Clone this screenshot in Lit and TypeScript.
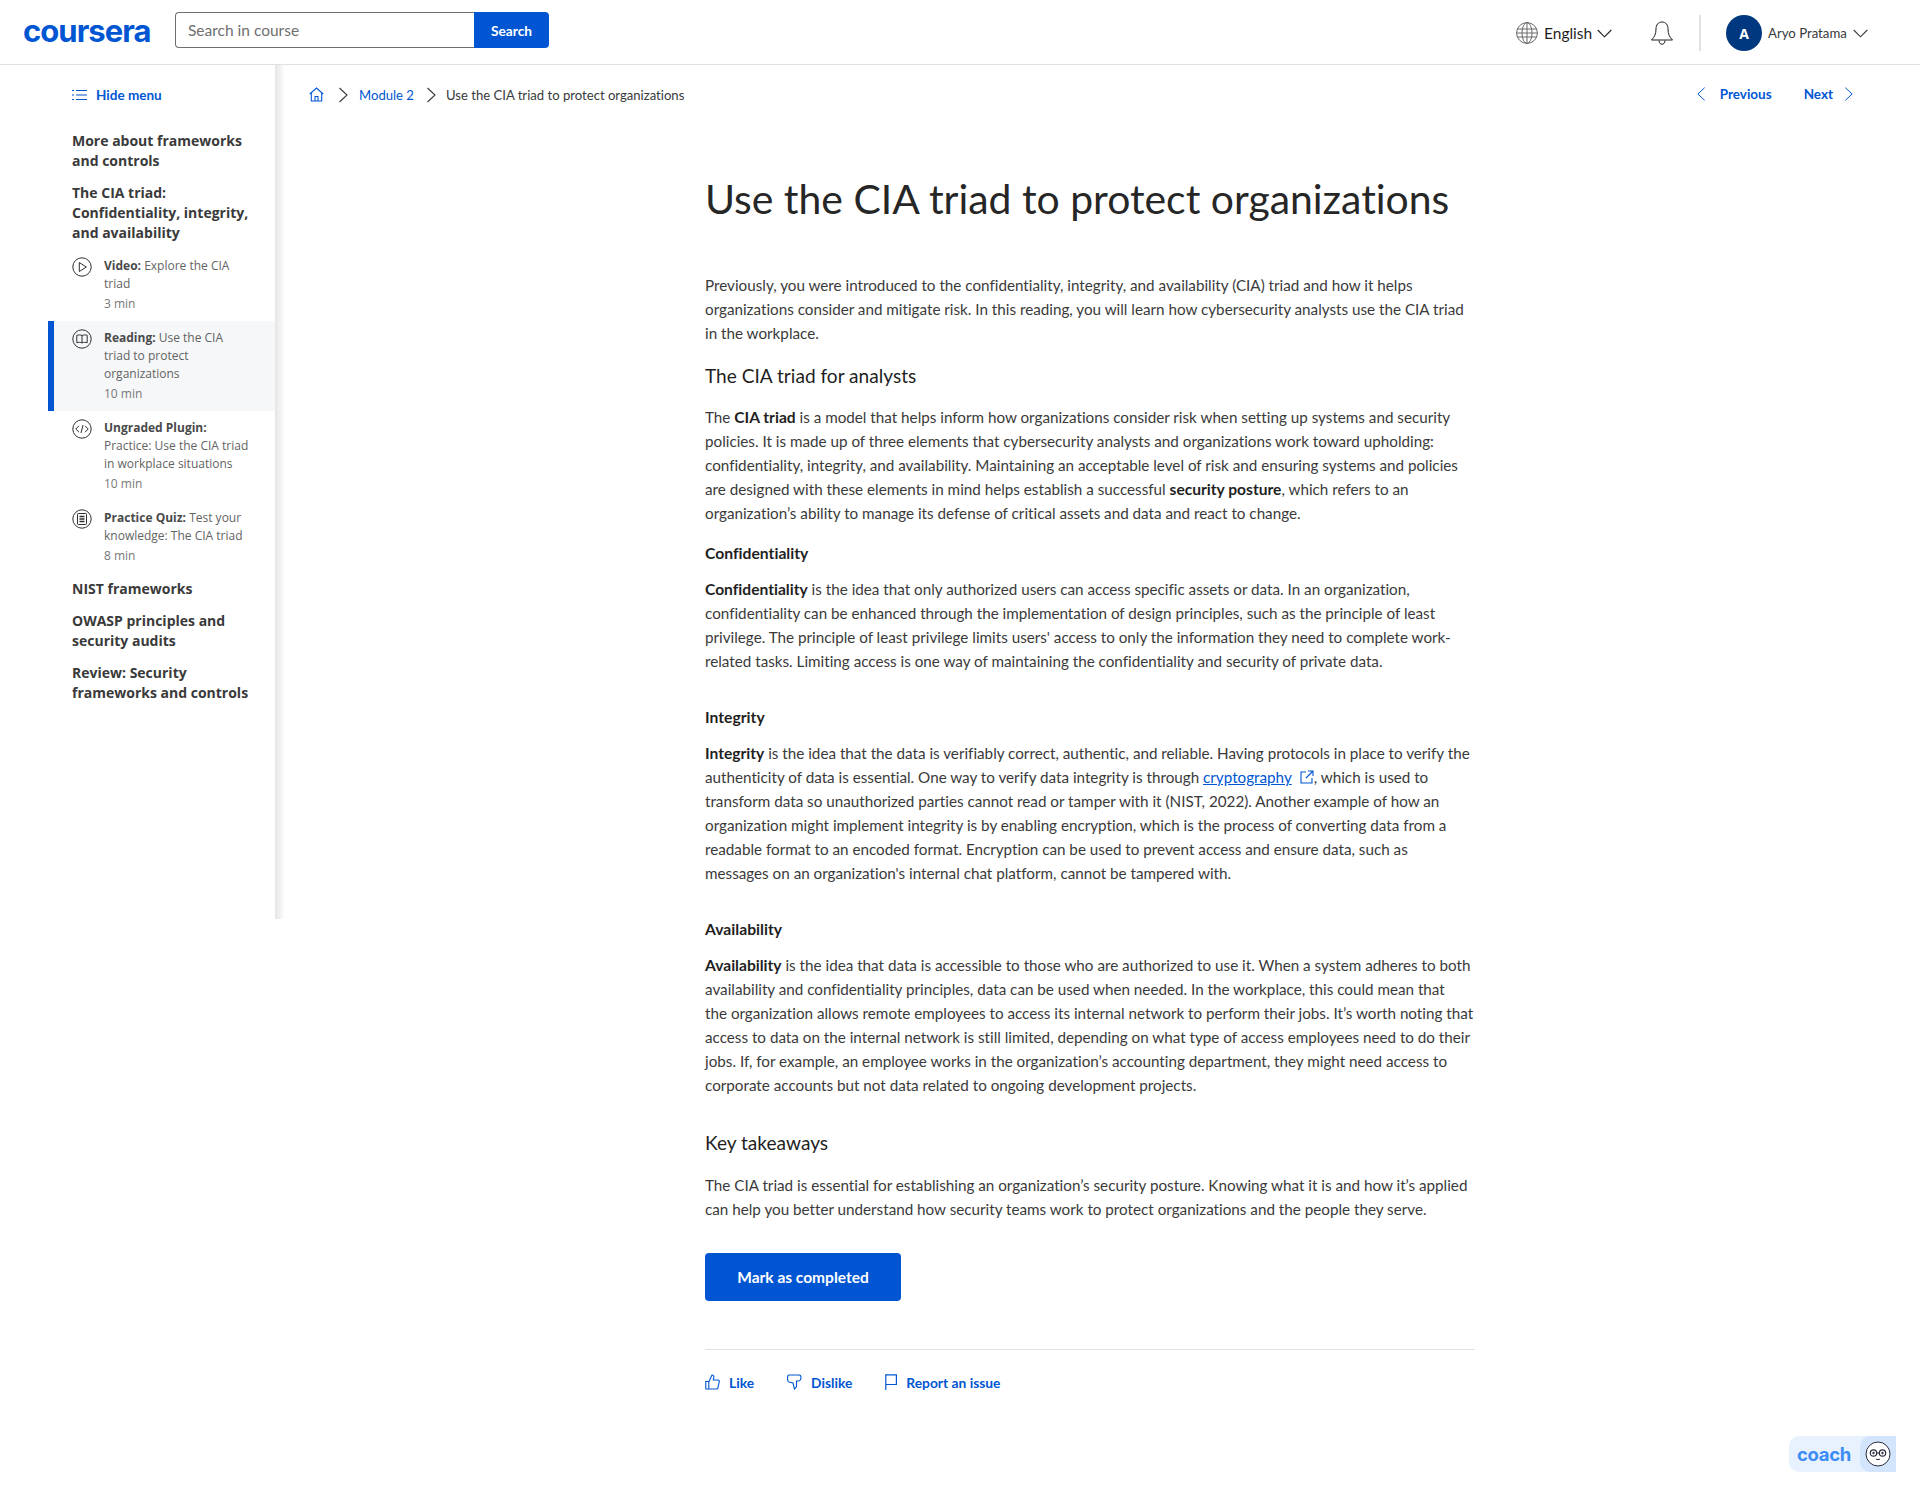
import { LitElement, html, css, svg } from "lit";
import { customElement } from "lit/decorators.js";

const chevR = (s = 10, h = 16) => html`<svg class="ic" width=${s} height=${h} viewBox="0 0 10 16" fill="none" stroke="currentColor" stroke-width="1.1"><path d="M1.5 1l7.5 7-7.5 7"/></svg>`;
const chevL = () => html`<svg class="ic" width="9" height="16" viewBox="0 0 10 16" fill="none" stroke="currentColor" stroke-width="1.1"><path d="M8.5 1L1 8l7.5 7"/></svg>`;
const chevD = () => html`<svg class="ic" width="15" height="9" viewBox="0 0 15 9" fill="none" stroke="currentColor" stroke-width="1.1"><path d="M.7 1l6.8 6.8L14.3 1"/></svg>`;

const circle = (inner: unknown) => html`<svg class="item-ic" width="20" height="20" viewBox="0 0 20 20" fill="none" stroke="#2f2f2f" stroke-width="1"><circle cx="10" cy="10" r="9.2"/>${inner}</svg>`;
const icons: Record<string, unknown> = {
  play: circle(svg`<path d="M7.3 5.5v9l7-4.5z"/>`),
  book: circle(svg`<path d="M10 6.5C8.5 5.8 6.5 5.8 4.8 6.3v7.4c1.7-.5 3.7-.5 5.2.2 1.500-.7 3.500-.7 5.200-.2V6.300c-1.700-.5-3.700-.5-5.200.2zM10 6.500v7.400"/>`),
  code: circle(svg`<path d="M7 6.800L3.800 10 7 13.200M13 6.800l3.200 3.200-3.200 3.200M11 6l-2 8"/>`),
  quiz: circle(svg`<rect x="5.500" y="4.500" width="9" height="11" rx=".8"/><path d="M7.500 7.500h5M7.500 10h5M7.500 12.500h5" stroke-width="1.300"/>`),
};

@customElement("app-root")
export class AppRoot extends LitElement {
  static styles = css`
    :host { display: block; min-height: 1496px; position: relative; background: #fff; font-family: "Lato", "Liberation Sans", sans-serif; font-variant-ligatures: none; color: #3a3a3a; overflow: hidden; }
    * { box-sizing: border-box; }
    .ic { display: block; flex: none; }

    header { height: 65px; border-bottom: 1px solid #e1e1e1; display: flex; align-items: center; padding: 0 52px 4px 23px; }
    .logo { font: 700 31px/1 "Inter", sans-serif; letter-spacing: -.95px; color: #0056d2; width: 152px; }
    .search { display: flex; height: 36px; }
    .search .inp { width: 299px; border: 1px solid #6f6f6f; border-right: 0; border-radius: 4px 0 0 4px; padding: 0 12px; display: flex; align-items: center; font-size: 15.500px; color: #6f6f6f; }
    .search .btn { width: 75px; background: #0056d2; color: #fff; font-weight: 700; font-size: 13.700px; display: flex; align-items: center; justify-content: center; border-radius: 0 4px 4px 0; }
    .right { margin-left: auto; margin-top: 6px; display: flex; align-items: center; }
    .lang { display: flex; align-items: center; font-size: 15.500px; color: #1f1f1f; }
    .lang svg:first-child { margin-right: 6px; }
    .lang span { width: 53px; }
    .bell { margin-left: 39px; }
    .vsep { width: 2px; height: 36px; background: #e1e1e1; margin: 0 25px 0 26px; }
    .avatar { width: 36px; height: 36px; border-radius: 50%; background: #00387f; color: #fff; font-weight: 700; font-size: 14px; display: flex; align-items: center; justify-content: center; font-family: "Open Sans", sans-serif; }
    .user { font-size: 13.200px; margin: 0 6px; width: 79px; white-space: nowrap; color: #373a3c; }

    .body { display: flex; align-items: flex-start; }
    aside { width: 275px; height: 854px; flex: none; background: #fff; font-family: "Open Sans", sans-serif; padding-top: 20px; position: relative; }
    aside::after { content: ""; position: absolute; top: 0; bottom: 0; left: 100%; width: 10px; background: linear-gradient(90deg, rgba(0,0,0,.1), rgba(0,0,0,0)); }
    .hide { display: flex; align-items: center; gap: 9px; color: #0056d2; font: 700 13.500px/20px "Lato", sans-serif; padding-left: 72px; margin-bottom: 26px; }
    .sec { font-weight: 700; font-size: 14px; line-height: 20px; color: #3a3a3a; margin: 0 0 12px 72px; white-space: nowrap; }
    .item { margin-left: 48px; display: flex; padding: 8px 0 7px 24px; font-size: 12px; line-height: 18px; color: #636363; white-space: nowrap; }
    .item b { font-weight: 700; color: #4a4a4a; }
    .item.on { background: #f5f7f8; box-shadow: inset 6px 0 0 #0056d2; }
    .item-ic { flex: none; margin: 0 12px 0 0; }
    .dur { line-height: 20px; margin-top: 1px; color: #787878; }
    .items { margin: -6px 0 6px; }

    main { flex: 1; min-width: 0; }
    .crumbs { height: 60px; display: flex; align-items: center; padding: 0 67px 1px 34px; font-size: 13.100px; color: #0056d2; }
    .crumbs .sep { color: #373a3c; margin: 0 11px 0 14px; }
    .crumbs .sep2 { color: #373a3c; margin: 0 10px 0 12px; }
    .crumbs .cur { color: #373a3c; }
    .nav { margin-left: auto; margin-bottom: 2px; display: flex; align-items: center; font-weight: 700; font-size: 13.500px; }
    .nav .txt1 { margin: 0 32px 0 14px; }
    .nav .txt2 { margin-right: 11px; }

    article { margin-left: 430px; width: 770px; padding-top: 46px; white-space: nowrap; }
    h1 { margin: 0 0 46px; font-weight: 400; font-size: 40.900px; line-height: 56px; color: #262626; }
    p { margin: 0; font-size: 15.230px; line-height: 24px; }
    p b { color: #1f1f1f; font-weight: 700; font-size: 15.600px; }
    h2 { margin: 17px 0 15px; font-weight: 400; font-size: 19.100px; line-height: 28px; color: #1f1f1f; }
    h3 { margin: 16px 0 12px; font-weight: 700; font-size: 15.700px; line-height: 24px; color: #1f1f1f; }
    h3.big { margin-top: 32px; }
    h2.key { margin: 32px 0 16px; }
    a { color: #0056d2; text-decoration: underline; }
    .ext { display: inline-block; vertical-align: -1px; margin: 0 0 0 8px; }
    .done { margin-top: 32px; width: 196px; height: 48px; border-radius: 4px; background: #0056d2; color: #fff; font-weight: 700; font-size: 15.500px; display: flex; align-items: center; justify-content: center; }
    hr { margin: 48px 0 0; border: 0; border-top: 1px solid #e1e1e1; }
    .acts { display: flex; align-items: center; height: 32px; margin-top: 16px; color: #0056d2; font-weight: 700; font-size: 13.800px; }
    .act { display: flex; align-items: center; gap: 9px; margin-right: 33px; }

    .coach { position: absolute; left: 1789px; top: 1436px; width: 107px; height: 36px; border-radius: 10px 0 0 10px; background: #e8f1fe; display: flex; align-items: center; overflow: hidden; }
    .coach span { font: 700 18.500px/1 "Inter", sans-serif; color: #3c8cf5; margin-left: 8px; width: 63px; letter-spacing: -.3px; }
    .coach .r { width: 36px; height: 36px; background: #d3e4fd; border-radius: 10px 0 0 10px; display: flex; align-items: center; justify-content: center; }
  `;

  private item(icon: string, label: string, lines: unknown, dur: string, on = false) {
    return html`<div class="item ${on ? "on" : ""}">${icons[icon]}<div><b>${label}</b> ${lines}<div class="dur">${dur}</div></div></div>`;
  }

  render() {
    return html`
      <header>
        <div class="logo">coursera</div>
        <div class="search"><div class="inp">Search in course</div><div class="btn">Search</div></div>
        <div class="right">
          <div class="lang">
            <svg width="22" height="22" viewBox="0 0 22 22" fill="none" stroke="#6a6a6a" stroke-width="1"><circle cx="11" cy="11" r="10.400"/><ellipse cx="11" cy="11" rx="5" ry="10.400"/><path d="M11 .6v20.800M1 7h20M1 15h20M.6 11h20.800"/></svg>
            <span>English</span>${chevD()}
          </div>
          <svg class="bell ic" width="22" height="24" viewBox="0 0 22 24" fill="none" stroke="#1f1f1f" stroke-width="1"><path d="M11 1c-4 0-6 3-6 7 0 5-1.500 8-4.500 11h21c-3-3-4.500-6-4.500-11 0-4-2-7-6-7z"/><path d="M8 19.500c0 5 6 5 6 0"/></svg>
          <div class="vsep"></div>
          <div class="avatar">A</div>
          <div class="user">Aryo Pratama</div>${chevD()}
        </div>
      </header>
      <div class="body">
        <aside>
          <div class="hide">
            <svg class="ic" width="15" height="12" viewBox="0 0 15 12" fill="none" stroke="#0056d2" stroke-width="1.200"><path d="M4 1.500h11M4 6h11M4 10.500h11M0 1.500h2M0 6h2M0 10.500h2"/></svg>
            Hide menu
          </div>
          <div class="sec">More about frameworks<br />and controls</div>
          <div class="sec">The CIA triad:<br />Confidentiality, integrity,<br />and availability</div>
          <div class="items">
            ${this.item("play", "Video:", html`Explore the CIA<br />triad`, "3 min")}
            ${this.item("book", "Reading:", html`Use the CIA<br />triad to protect<br />organizations`, "10 min", true)}
            ${this.item("code", "Ungraded Plugin:", html`<br />Practice: Use the CIA triad<br />in workplace situations`, "10 min")}
            ${this.item("quiz", "Practice Quiz:", html`Test your<br />knowledge: The CIA triad`, "8 min")}
          </div>
          <div class="sec">NIST frameworks</div>
          <div class="sec">OWASP principles and<br />security audits</div>
          <div class="sec">Review: Security<br />frameworks and controls</div>
        </aside>
        <main>
          <div class="crumbs">
            <svg class="ic" width="15" height="15" viewBox="0 0 15 15" fill="none" stroke="#0056d2" stroke-width="1.100"><path d="M.8 7L7.500 1l6.700 6M2.300 6v8h10.400V6M6 14V9.500h3V14"/></svg>
            <span class="sep">${chevR()}</span><span>Module 2</span>
            <span class="sep2">${chevR()}</span><span class="cur">Use the CIA triad to protect organizations</span>
            <div class="nav">${chevL()}<span class="txt1">Previous</span><span class="txt2">Next</span>${chevR(9, 16)}</div>
          </div>
          <article>
            <h1>Use the CIA triad to protect organizations</h1>
            <p>Previously, you were introduced to the confidentiality, integrity, and availability (CIA) triad and how it helps<br />organizations consider and mitigate risk. In this reading, you will learn how cybersecurity analysts use the CIA triad<br />in the workplace.</p>
            <h2>The CIA triad for analysts</h2>
            <p>The <b>CIA triad</b> is a model that helps inform how organizations consider risk when setting up systems and security<br />policies. It is made up of three elements that cybersecurity analysts and organizations work toward upholding:<br />confidentiality, integrity, and availability. Maintaining an acceptable level of risk and ensuring systems and policies<br />are designed with these elements in mind helps establish a successful <b>security posture</b>, which refers to an<br />organization’s ability to manage its defense of critical assets and data and react to change.</p>
            <h3>Confidentiality</h3>
            <p><b>Confidentiality</b> is the idea that only authorized users can access specific assets or data. In an organization,<br />confidentiality can be enhanced through the implementation of design principles, such as the principle of least<br />privilege. The principle of least privilege limits users' access to only the information they need to complete work-<br />related tasks. Limiting access is one way of maintaining the confidentiality and security of private data.</p>
            <h3 class="big">Integrity</h3>
            <p><b>Integrity</b> is the idea that the data is verifiably correct, authentic, and reliable. Having protocols in place to verify the<br />authenticity of data is essential. One way to verify data integrity is through <a>cryptography</a><svg class="ext" width="14" height="14" viewBox="0 0 14 14" fill="none" stroke="#0056d2" stroke-width="1.100"><path d="M6 2H1v11h11V8M8 1h5v5M13 1L6 8"/></svg>, which is used to<br />transform data so unauthorized parties cannot read or tamper with it (NIST, 2022). Another example of how an<br />organization might implement integrity is by enabling encryption, which is the process of converting data from a<br />readable format to an encoded format. Encryption can be used to prevent access and ensure data, such as<br />messages on an organization's internal chat platform, cannot be tampered with.</p>
            <h3 class="big">Availability</h3>
            <p><b>Availability</b> is the idea that data is accessible to those who are authorized to use it. When a system adheres to both<br />availability and confidentiality principles, data can be used when needed. In the workplace, this could mean that<br />the organization allows remote employees to access its internal network to perform their jobs. It’s worth noting that<br />access to data on the internal network is still limited, depending on what type of access employees need to do their<br />jobs. If, for example, an employee works in the organization’s accounting department, they might need access to<br />corporate accounts but not data related to ongoing development projects.</p>
            <h2 class="key">Key takeaways</h2>
            <p>The CIA triad is essential for establishing an organization’s security posture. Knowing what it is and how it’s applied<br />can help you better understand how security teams work to protect organizations and the people they serve.</p>
            <div class="done">Mark as completed</div>
            <hr />
            <div class="acts">
              <div class="act"><svg class="ic" width="15" height="16" viewBox="0 0 15 16" fill="none" stroke="#0056d2" stroke-width="1.100"><path d="M.8 7.500h3v7.500h-3zM3.800 8L7 1c1.500 0 2 1 1.800 2.500L8.300 6h4.500c1.200 0 1.700 1 1.400 2l-1.300 6c-.2.700-.7 1-1.400 1H3.800"/></svg>Like</div>
              <div class="act"><svg class="ic" width="15" height="16" viewBox="0 0 15 16" fill="none" stroke="#0056d2" stroke-width="1.100"><path d="M2 1h10c1 0 2 1 2 2.500S13 7 12 7h-2.500v5.500L7.500 15 6 9 2 8c-1-.3-1.500-1-1.500-3.500S1 1 2 1z"/></svg>Dislike</div>
              <div class="act"><svg class="ic" width="12" height="16" viewBox="0 0 12 16" fill="none" stroke="#0056d2" stroke-width="1.200"><path d="M.8 16V.8h10.600v9.700H.8"/></svg>Report an issue</div>
            </div>
          </article>
        </main>
      </div>
      <div class="coach">
        <span>coach</span>
        <div class="r"><svg width="26" height="26" viewBox="0 0 26 26" fill="#fff" stroke="#2b2b40" stroke-width="1"><circle cx="13" cy="13" r="12"/><circle cx="8.500" cy="12" r="3.200" fill="none" stroke-width="1.200"/><circle cx="17.500" cy="12" r="3.200" fill="none" stroke-width="1.200"/><path d="M11.700 12h2.600M11 18c1.200.8 2.800.8 4 0" fill="none"/><circle cx="8.500" cy="12" r=".8" fill="#2b2b40"/><circle cx="17.500" cy="12" r=".8" fill="#2b2b40"/></svg></div>
      </div>
    `;
  }
}
